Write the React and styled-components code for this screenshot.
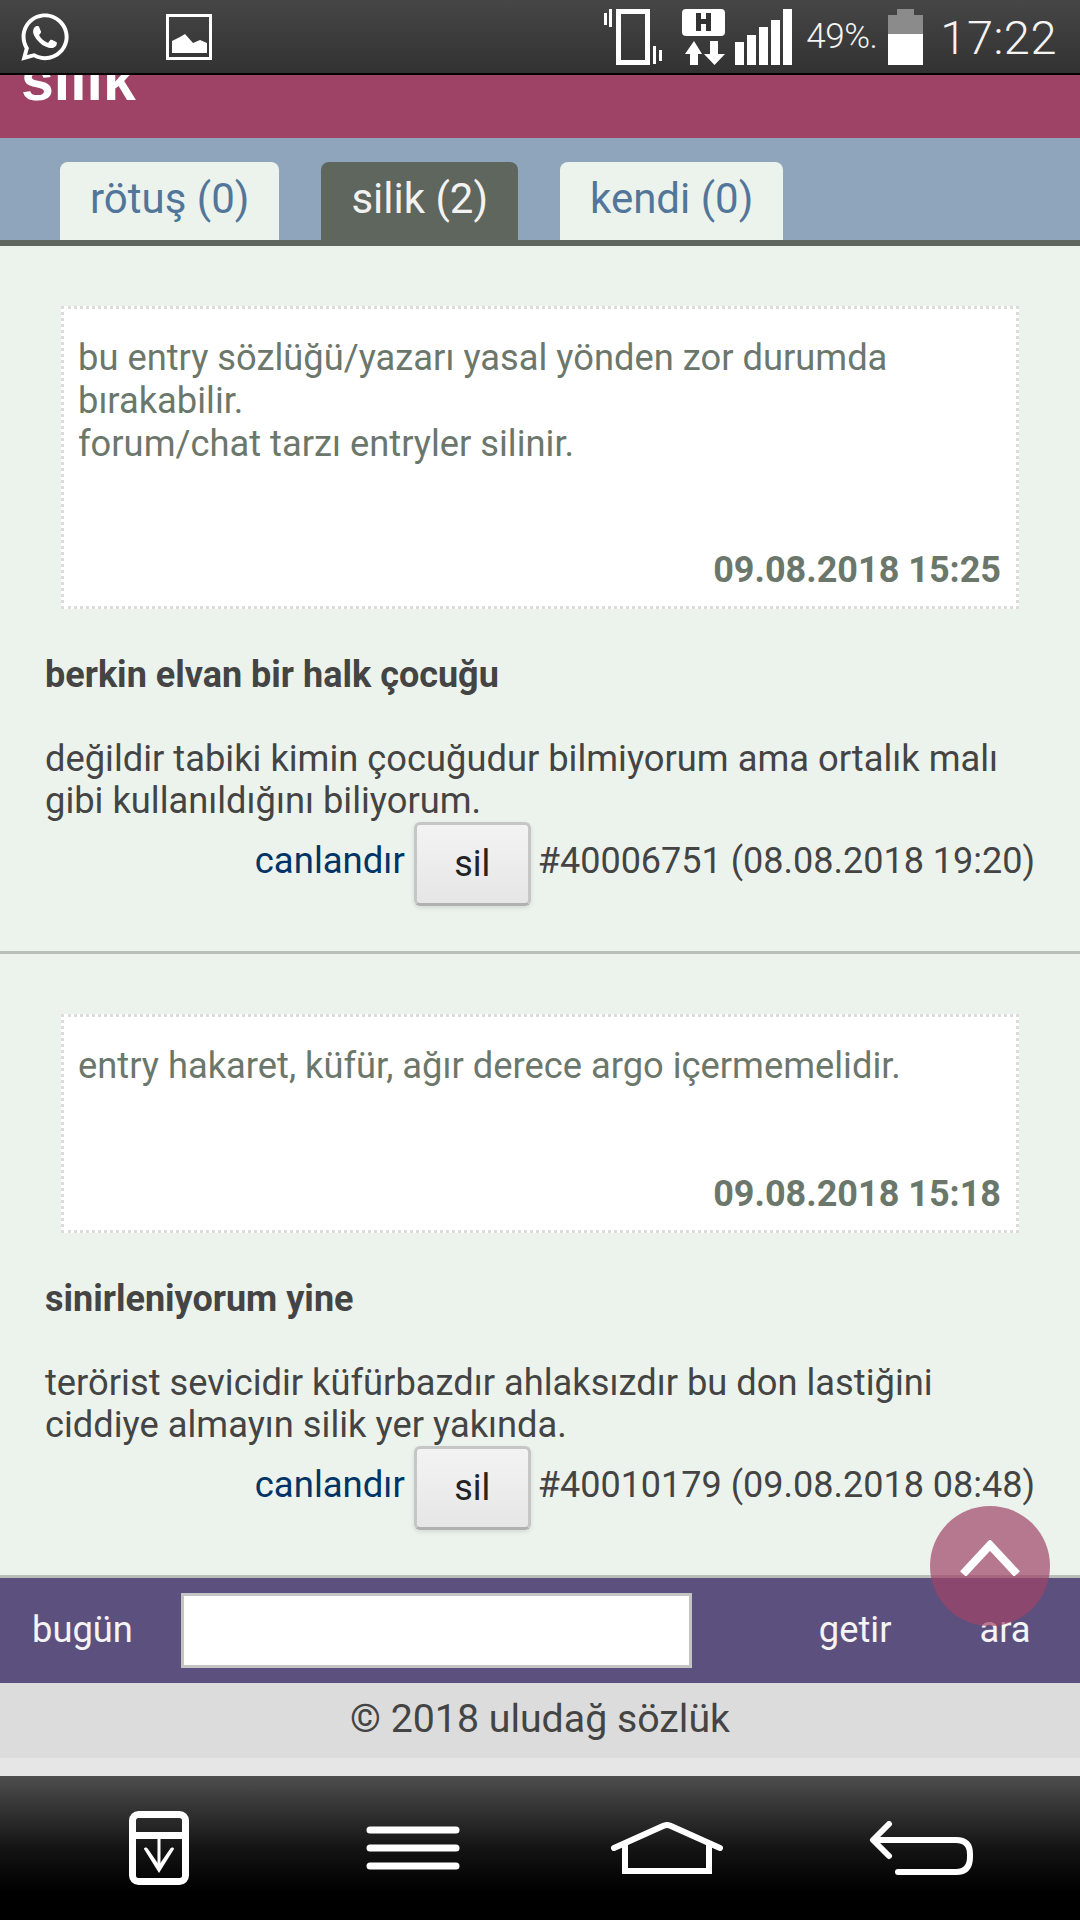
import React from 'react';
import styled, { createGlobalStyle } from 'styled-components';
import { FaWhatsapp } from 'react-icons/fa';

const Global = createGlobalStyle`
  html, body { margin: 0; padding: 0; background: #e6e6e6; }
  * { box-sizing: border-box; }
`;
const Page = styled.div`
  position: relative; width: 1080px; height: 1920px; overflow: hidden;
  display: flex; flex-direction: column;
  font-family: Roboto, "Liberation Sans", sans-serif; background: #e6e6e6;
`;
const StatusBar = styled.div`
  flex: none; height: 75px; display: flex; align-items: center;
  padding: 1px 23px 0 18px; color: #fff;
  background: linear-gradient(#464646, #323232);
  border-bottom: 2px solid #000;
`;
const StatusLeft = styled.div`display: flex; align-items: center; gap: 94px; flex: 1;`;
const StatusRight = styled.div`display: flex; align-items: center;`;
const Gap = styled.span`flex: none; width: ${p => p.$w}px;`;
const Percent = styled.span`
  font-family: Roboto, sans-serif; font-weight: 300; font-size: 35px; letter-spacing: -.5px;
  width: 67px; margin: 0 15px 0 14px; position: relative; top: -1px; color: #f4f4f4; white-space: nowrap;
`;
const Clock = styled.span`
  font-family: Roboto, sans-serif; font-weight: 300; font-size: 47px; letter-spacing: .5px;
  margin-left: 17px; color: #f4f4f4; line-height: 1;
`;
const Header = styled.div`
  flex: none; height: 63px; overflow: hidden; background: #9f4366; padding-left: 21px;
`;
const HeaderTitle = styled.h1`
  margin: -22px 0 0; font: bold 59px/54px "Liberation Sans", sans-serif; color: #fff;
`;
const TabBar = styled.div`
  flex: none; height: 108px; display: flex; gap: 42px; align-items: flex-end;
  padding-left: 60px; background: #8fa5bb; border-bottom: 6px solid #5f665e;
`;
const Tab = styled.div`
  height: 78px; padding: 0 30px; border-radius: 8px 8px 0 0;
  font-size: 42px; line-height: 73px;
  background: ${p => (p.$active ? '#5f665e' : '#ecf3ec')};
  color: ${p => (p.$active ? '#f2f2f2' : '#52769a')};
`;
const Content = styled.div`flex: none; height: 1329px; background: #ecf3ec;`;
const Entry = styled.section`
  height: ${p => p.$h}px; padding-top: 60px;
  border-bottom: ${p => (p.$last ? 'none' : '3px solid #b9beb9')};
`;
const NoteBox = styled.div`
  margin: 0 61px; height: ${p => p.$h}px; background: #fff; border: 3px dotted #dcdcdc;
  padding: 27px 15px 0 14px; display: flex; flex-direction: column;
  color: #6c776c; font-size: 36.3px; line-height: 43px;
`;
const NoteDate = styled.div`
  margin-top: auto; margin-bottom: 14px; text-align: right; font-weight: 700; font-size: 36px; line-height: 43px;
`;
const EntryTitle = styled.h2`
  margin: 45px 0 0 45px; font-size: 36px; line-height: 43px; font-weight: 700; color: #444;
`;
const EntryBody = styled.p`
  margin: 41px 20px 0 45px; font-size: 36.3px; line-height: 42px; color: #444;
`;
const Actions = styled.div`
  display: flex; align-items: center; justify-content: flex-end; gap: 9px;
  padding-right: 45px; color: #444; font-size: 36px;
`;
const ActionText = styled.span`padding-bottom: 7px; margin-left: -2px;`;
const Revive = styled.a`color: #003366; font-size: 36.5px; padding-bottom: 7px;`;
const DeleteButton = styled.button`
  width: 117px; height: 84px; padding: 0; border: 3px solid #c6c6c6; border-bottom-color: #b0b0b0;
  border-radius: 6px; background: linear-gradient(#f3f3f3, #e6e6e6);
  box-shadow: 0 2px 4px rgba(0,0,0,.1);
  font-family: inherit; font-size: 36px; color: #222;
`;
const SearchBar = styled.div`
  flex: none; height: 108px; background: #5c517e; border-top: 3px solid #b9beb9;
  display: flex; align-items: center; color: #f4f4f4; font-size: 36.3px; padding: 0 0 2px 32px;
`;
const SearchInput = styled.input`
  width: 511px; height: 75px; margin: 2px 127px 0 48px;
  border: 3px solid #c4c4c4; background: #fff; padding: 0; border-radius: 0;
`;
const SearchLink = styled.span`margin-right: ${p => p.$mr || 0}px;`;
const Copyright = styled.div`
  flex: none; height: 75px; background: #dcdcdc; color: #444; font-size: 39.3px; padding-bottom: 3px;
  display: flex; align-items: center; justify-content: center;
`;
const Spacer = styled.div`flex: none; height: 18px; background: #e6e6e6;`;
const NavBar = styled.div`
  flex: none; height: 144px; display: grid; grid-template-columns: repeat(4, 254px);
  padding-left: 32px; align-items: center; justify-items: center;
  background: linear-gradient(#4e4e4e 0%, #141414 50%, #000 80%);
`;
const ScrollTop = styled.div`
  position: absolute; left: 930px; top: 1506px; width: 120px; height: 120px; border-radius: 50%;
  padding-bottom: 16px;
  background: rgba(159, 67, 102, .7); display: flex; align-items: center; justify-content: center;
`;

const Vibrate = () => (
  <svg width="58" height="56" viewBox="0 0 58 56" fill="#fff">
    <path fillRule="evenodd" d="M12 0h34v56H12zM17 5v46h24V5z" />
    <rect x="0" y="4" width="3" height="12" /><rect x="5" y="0" width="3" height="18" />
    <rect x="49" y="37" width="3" height="18" /><rect x="55" y="41" width="3" height="11" />
  </svg>
);
const DataIcon = () => (
  <svg width="43" height="56" viewBox="0 0 43 56">
    <rect x="0" y="0" width="43" height="27" rx="4" fill="#fff" />
    <path d="M14 4h5v6h5V4h5v18h-5v-7h-5v7h-5z" fill="#333" />
    <path d="M3 45 12 32l8 13h-4v11H8V45zM22 45h6V32h8v13h7L32.500 56z" fill="#fff" />
  </svg>
);
const Signal = () => (
  <svg width="57" height="56" viewBox="0 0 57 56" fill="#fff">
    <rect x="0" y="33" width="9" height="23" /><rect x="12" y="26" width="9" height="30" />
    <rect x="24" y="18" width="9" height="38" /><rect x="36" y="11" width="9" height="45" />
    <rect x="48" y="0" width="9" height="56" />
  </svg>
);
const Battery = () => (
  <svg width="35" height="56" viewBox="0 0 35 56">
    <path d="M9 0h17v6h9v26H0V6h9z" fill="#8b8b8b" />
    <rect x="0" y="25" width="35" height="31" fill="#fff" />
  </svg>
);
const ImageIcon = () => (
  <svg width="46" height="46" viewBox="0 0 46 46">
    <rect x="1.500" y="1.500" width="43" height="43" fill="none" stroke="#fff" strokeWidth="3" />
    <path d="M6 39V27L14 23 19 20l8 9 7-3 7 3 0 10z" fill="#fff" />
  </svg>
);
const SaveIcon = () => (
  <svg width="60" height="74" viewBox="0 0 60 74">
    <rect x="3.500" y="3.500" width="53" height="67" rx="6" fill="none" stroke="#fff" strokeWidth="7" />
    <path d="M3 24.500h54" stroke="#fff" strokeWidth="7" fill="none" />
    <path d="M28.500 26h3v28h-3z" fill="#fff" />
    <path d="M15 38c0-2 3-2 4 0l11 16 11-16c1-2 4-2 4 0l-15 24z" fill="#fff" />
  </svg>
);
const MenuIcon = () => (
  <svg width="94" height="44" viewBox="0 0 94 44" stroke="#fff" strokeWidth="7" strokeLinecap="round">
    <path d="M4 4h86M4 22h86M4 40h86" />
  </svg>
);
const HomeIcon = () => (
  <svg width="114" height="52" viewBox="0 0 114 52" fill="none" stroke="#fff">
    <path d="M4 26 53 4q4-2 8 0l49 22" strokeWidth="6" strokeLinecap="round" />
    <path d="M15 22v27h84V22" strokeWidth="6" />
  </svg>
);
const BackIcon = () => (
  <svg width="104" height="54" viewBox="0 0 104 54" fill="none" stroke="#fff" strokeWidth="6" strokeLinecap="round" strokeLinejoin="round">
    <path d="M20 3 4 19l16 16" />
    <path d="M5 19h82q14 0 14 14v3q0 15-14 15H29" />
  </svg>
);

const entries = [
  {
    h: 708, boxH: 303,
    note: <>bu entry sözlüğü/yazarı yasal yönden zor durumda<br />bırakabilir.<br />forum/chat tarzı entryler silinir.</>,
    date: '09.08.2018 15:25', title: 'berkin elvan bir halk çocuğu',
    body: <>değildir tabiki kimin çocuğudur bilmiyorum ama ortalık malı<br />gibi kullanıldığını biliyorum.</>,
    id: '#40006751 (08.08.2018 19:20)',
  },
  {
    h: 621, boxH: 219, last: true,
    note: 'entry hakaret, küfür, ağır derece argo içermemelidir.',
    date: '09.08.2018 15:18', title: 'sinirleniyorum yine',
    body: <>terörist sevicidir küfürbazdır ahlaksızdır bu don lastiğini<br />ciddiye almayın silik yer yakında.</>,
    id: '#40010179 (09.08.2018 08:48)',
  },
];

export default function App() {
  return (
    <Page>
      <Global />
      <StatusBar>
        <StatusLeft>
          <FaWhatsapp size={54} color="#fff" />
          <ImageIcon />
        </StatusLeft>
        <StatusRight>
          <Vibrate />
          <Gap $w={20} />
          <DataIcon />
          <Gap $w={10} />
          <Signal />
          <Percent>49%.</Percent>
          <Battery />
          <Clock>17:22</Clock>
        </StatusRight>
      </StatusBar>
      <Header><HeaderTitle>silik</HeaderTitle></Header>
      <TabBar>
        <Tab>rötuş (0)</Tab>
        <Tab $active>silik (2)</Tab>
        <Tab>kendi (0)</Tab>
      </TabBar>
      <Content>
        {entries.map(e => (
          <Entry key={e.id} $h={e.h} $last={e.last}>
            <NoteBox $h={e.boxH}>
              <div>{e.note}</div>
              <NoteDate>{e.date}</NoteDate>
            </NoteBox>
            <EntryTitle>{e.title}</EntryTitle>
            <EntryBody>{e.body}</EntryBody>
            <Actions>
              <Revive>canlandır</Revive>
              <DeleteButton>sil</DeleteButton>
              <ActionText>{e.id}</ActionText>
            </Actions>
          </Entry>
        ))}
      </Content>
      <SearchBar>
        <span>bugün</span>
        <SearchInput />
        <SearchLink $mr={88}>getir</SearchLink>
        <SearchLink>ara</SearchLink>
      </SearchBar>
      <Copyright>© 2018 uludağ sözlük</Copyright>
      <Spacer />
      <NavBar>
        <SaveIcon />
        <MenuIcon />
        <HomeIcon />
        <BackIcon />
      </NavBar>
      <ScrollTop>
        <svg width="60" height="36" viewBox="0 0 60 36" fill="none" stroke="#fff" strokeWidth="8">
          <path d="M3 34 30 5l27 29" />
        </svg>
      </ScrollTop>
    </Page>
  );
}
